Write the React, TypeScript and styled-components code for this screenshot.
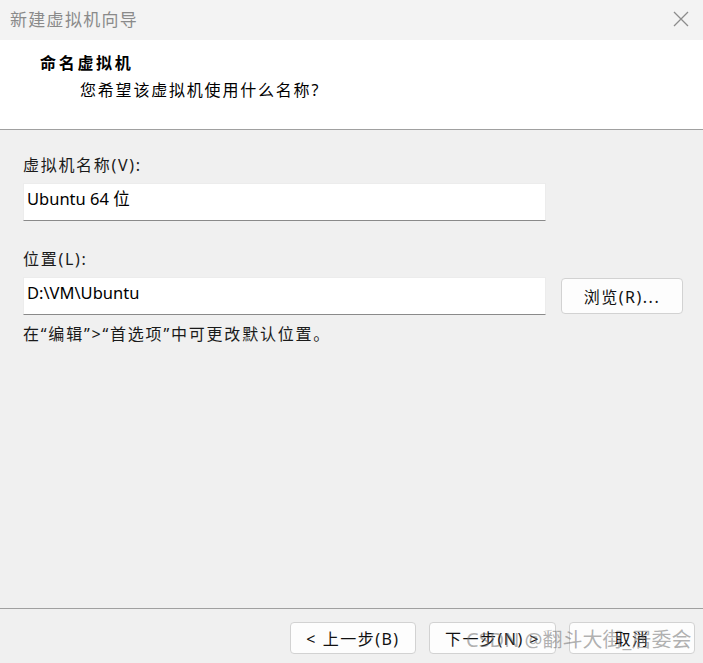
import React from "react";
import styled, { createGlobalStyle } from "styled-components";

const Global = createGlobalStyle`
  html, body { margin: 0; padding: 0; background: #f0f0f0; }
  * { box-sizing: border-box; }
`;

const FONT = `"Noto Sans", "Noto Sans CJK SC", sans-serif`;

const Window = styled.div`
  width: 703px;
  height: 663px;
  display: flex;
  flex-direction: column;
  background: #f0f0f0;
  font-family: ${FONT};
  position: relative;
  overflow: hidden;
`;

const TitleBar = styled.div`
  height: 40px;
  background: #f3f3f3;
  display: flex;
  align-items: center;
  justify-content: space-between;
  padding: 0 14px 3px 10px;
`;

const TitleText = styled.span`
  font-size: 17px;
  color: #8a8a8a;
  letter-spacing: 1.3px;
`;

const CloseIcon = styled.svg`
  width: 16px;
  height: 16px;
  display: block;
`;

const Header = styled.div`
  height: 90px;
  background: #fff;
  border-bottom: 1px solid #a0a0a0;
  padding: 13px 0 0 40px;
  display: flex;
  flex-direction: column;
`;

const HeaderTitle = styled.div`
  font-size: 16px;
  font-weight: 700;
  color: #000;
  letter-spacing: 2.7px;
  line-height: 20px;
`;

const HeaderSub = styled.div`
  font-size: 16px;
  color: #000;
  letter-spacing: 1.8px;
  line-height: 20px;
  margin: 7px 0 0 40px;
`;

const Body = styled.div`
  flex: 1;
  padding: 25px 20px 0 23px;
  display: flex;
  flex-direction: column;
`;

const Label = styled.div<{ $top?: number }>`
  font-size: 16px;
  line-height: 20px;
  color: #1a1a1a;
  letter-spacing: 1.7px;
  margin-top: ${(p) => p.$top ?? 0}px;
`;

const Row = styled.div`
  display: flex;
  align-items: center;
  gap: 15px;
  margin-top: 8px;
`;

const Field = styled.div`
  width: 523px;
  height: 38px;
  background: #fff;
  border: 1px solid #ececec;
  border-bottom: 1px solid #8a8a8a;
  padding: 2px 0 0 3px;
  font-size: 16.5px;
  line-height: 26px;
  color: #000;
`;

const Button = styled.button<{ $w: number; $h: number }>`
  width: ${(p) => p.$w}px;
  height: ${(p) => p.$h}px;
  background: #fdfdfd;
  border: 1px solid #d2d2d2;
  border-radius: 4px;
  font-family: ${FONT};
  font-size: 16px;
  letter-spacing: 1.5px;
  color: #111;
  padding: 0;
  display: flex;
  align-items: center;
  justify-content: center;
`;

const Hint = styled.div`
  font-size: 16px;
  line-height: 20px;
  color: #1a1a1a;
  letter-spacing: 1.8px;
  margin-top: 9px;
`;

const Footer = styled.div`
  height: 55px;
  border-top: 1px solid #a0a0a0;
  display: flex;
  justify-content: flex-end;
  align-items: flex-start;
  gap: 13px;
  padding: 13px 8px 0 0;
`;

const Watermark = styled.div`
  position: absolute;
  left: 466px;
  top: 627px;
  font-size: 20px;
  line-height: 26px;
  color: rgba(110, 110, 110, 0.55);
  font-family: "Noto Sans", "Noto Sans CJK SC", sans-serif;
  white-space: nowrap;
  pointer-events: none;
`;

export default function App() {
  return (
    <Window>
      <Global />
      <TitleBar>
        <TitleText>新建虚拟机向导</TitleText>
        <CloseIcon viewBox="0 0 16 16">
          <path d="M1 1 L15 15 M15 1 L1 15" stroke="#8c8c8c" strokeWidth="1.3" fill="none" />
        </CloseIcon>
      </TitleBar>
      <Header>
        <HeaderTitle>命名虚拟机</HeaderTitle>
        <HeaderSub>您希望该虚拟机使用什么名称?</HeaderSub>
      </Header>
      <Body>
        <Label>虚拟机名称(V):</Label>
        <Row>
          <Field>Ubuntu 64 位</Field>
        </Row>
        <Label $top={28}>位置(L):</Label>
        <Row>
          <Field>D:\VM\Ubuntu</Field>
          <Button $w={122} $h={36}>浏览(R)...</Button>
        </Row>
        <Hint>在“编辑”&gt;“首选项”中可更改默认位置。</Hint>
      </Body>
      <Footer>
        <Button $w={126} $h={32}>&lt; 上一步(B)</Button>
        <Button $w={127} $h={32}>下一步(N) &gt;</Button>
        <Button $w={126} $h={32}>取消</Button>
      </Footer>
      <Watermark>CSDN @翻斗大街_居委会</Watermark>
    </Window>
  );
}
